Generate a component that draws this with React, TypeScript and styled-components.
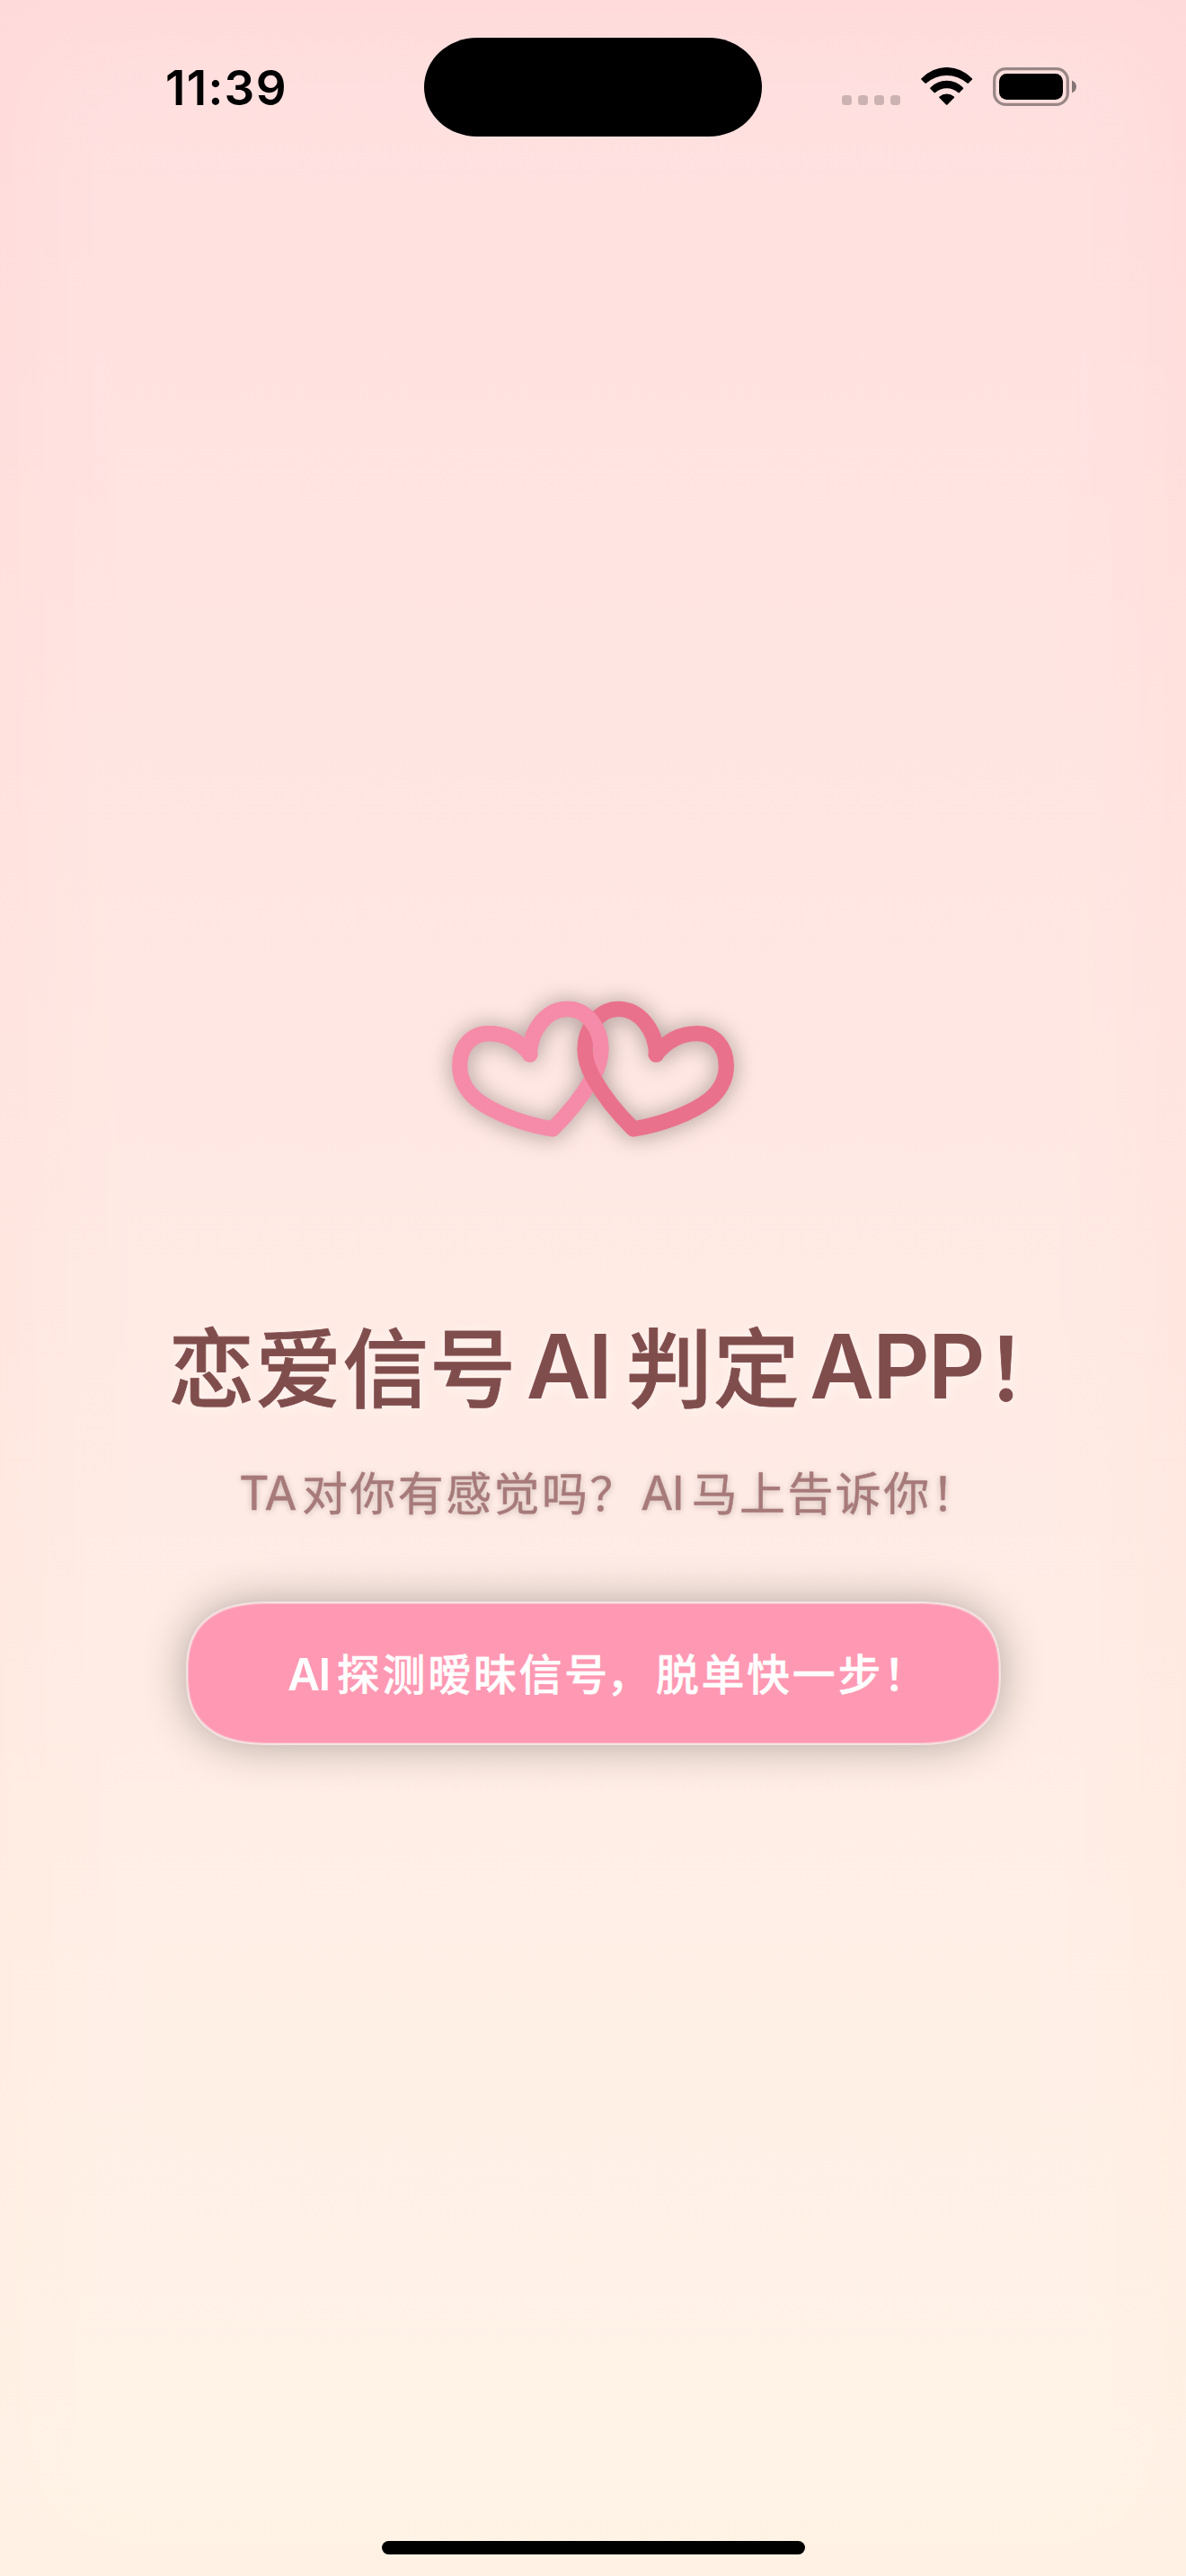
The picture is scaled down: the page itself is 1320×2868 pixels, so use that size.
import React from "react";
import styled, { createGlobalStyle } from "styled-components";

const GlobalStyle = createGlobalStyle`
  html, body { margin: 0; padding: 0; }
  *, *::before { box-sizing: border-box; }
`;

const latin = `Inter, "Liberation Sans", sans-serif`;
const chinese = `"Noto Sans CJK SC", "Noto Sans", sans-serif`;

const Screen = styled.div`
  position: relative;
  z-index: 0;
  display: flex;
  flex-direction: column;
  width: 1320px;
  height: 2868px;
  overflow: hidden;
  background: linear-gradient(180deg, #ffdada 0%, #fff2e4 100%);

  &::before {
    content: "";
    position: absolute;
    z-index: -1;
    inset: 40px;
    background: rgba(255, 255, 255, 0.16);
    filter: blur(60px);
  }
`;

const StatusBar = styled.header`
  display: grid;
  grid-template-columns: 1fr 376px 1fr;
  align-items: start;
  height: 194px;
  padding-top: 42px;
`;

const Clock = styled.time`
  padding-left: 184px;
  margin-top: 25px;
  font: 600 53px/62px ${latin};
  letter-spacing: 1.3px;
  color: #000;
`;

const Island = styled.div`
  height: 110px;
  border-radius: 59px / 55px;
  background: #000;
`;

const Indicators = styled.div`
  display: flex;
  justify-content: flex-end;
  align-items: flex-start;
  padding: 33px 122px 0 0;
`;

const SignalDots = styled.div`
  display: flex;
  gap: 7px;
  margin: 31px 23px 0 0;
`;

const Dot = styled.span`
  width: 11px;
  height: 11px;
  border-radius: 3.5px;
  background: rgba(0, 0, 0, 0.2);
`;

const WifiIcon = styled.svg`
  width: 58px;
  height: 42px;
  margin-right: 22px;
`;

const BatteryIcon = styled.svg`
  width: 93px;
  height: 43px;
`;

const Content = styled.main`
  flex: 1;
  display: flex;
  flex-direction: column;
  align-items: center;
  padding-top: 876px;
`;

const Hearts = styled.svg`
  width: 400px;
  height: 240px;
  overflow: visible;
  filter: drop-shadow(0 1px 12px rgba(0, 0, 0, 0.36));
`;

const Title = styled.h1`
  margin: 148px 0 0;
  font: 500 96px/120px ${chinese};
  letter-spacing: 1px;
  white-space: nowrap;
  color: #804d4d;
  -webkit-text-stroke: 0.8px #804d4d;
  text-shadow: 0 2px 16px rgba(255, 255, 255, 0.55);
`;

const Subtitle = styled.p`
  margin: 42px 0 0;
  font: 400 51px/80px ${chinese};
  letter-spacing: 2.4px;
  white-space: nowrap;
  color: #a77a7a;
  -webkit-text-stroke: 0.4px #a77a7a;
  text-shadow: 0 1px 7px rgba(0, 0, 0, 0.24);
`;

const Button = styled.button`
  display: flex;
  align-items: center;
  justify-content: center;
  width: 907px;
  height: 160px;
  margin: 83px 0 0;
  padding: 0 0 4px;
  border: 2px solid #f3e3e2;
  border-radius: 96px / 80px;
  corner-shape: superellipse(1.38);
  background: #ff99b3;
  box-shadow: inset 0 0 0 1px #ffb8c9, 0 1px 48px rgba(0, 0, 0, 0.31);
  font: 500 48px/76px ${chinese};
  letter-spacing: 2.7px;
  white-space: nowrap;
  color: #fff;
  -webkit-text-stroke: 0.4px #fff;
`;

const Label = styled.span`
  display: block;
`;

interface LatinProps {
  $size: number;
  $weight: number;
  $track: number;
  $before: number;
  $after: number;
  $lift: number;
  $stroke?: number;
}

const Latin = styled.span<LatinProps>`
  font: ${(p) => p.$weight} ${(p) => p.$size}px/1 ${latin};
  letter-spacing: ${(p) => p.$track}px;
  margin: 0 ${(p) => p.$after}px 0 ${(p) => p.$before}px;
  vertical-align: ${(p) => p.$lift}px;
  -webkit-text-stroke-width: ${(p) => p.$stroke ?? 0}px;
`;

const Mark = styled.span<{ $before?: number; $trim: number }>`
  margin: 0 ${(p) => -p.$trim}px 0 ${(p) => p.$before ?? 0}px;
`;

const HomeArea = styled.footer`
  display: flex;
  justify-content: center;
  padding-bottom: 24px;
`;

const HomeIndicator = styled.div`
  width: 471px;
  height: 15px;
  border-radius: 8px;
  background: #000;
`;

const heart =
  "M390 312C350 262 300 242 252 242C195 242 155 285 155 350C155 395 178 435 212 463C270 508 370 545 465 561C512 515 562 455 597 393C615 362 627 330 627 295C627 225 580 160 515 160C445 160 390 230 388 312Z";

function LinkedHearts() {
  return (
    <Hearts viewBox="0 0 1200 720" fill="none" strokeWidth={52} strokeLinejoin="round">
      <defs>
        <clipPath id="upper">
          <rect x="0" y="0" width="1200" height="295" />
        </clipPath>
      </defs>
      <path d={heart} stroke="#f58ba8" />
      <path d={heart} stroke="#ea718c" transform="translate(1200 0) scale(-1 1)" />
      <path d={heart} stroke="#f58ba8" clipPath="url(#upper)" />
    </Hearts>
  );
}

export default function App() {
  return (
    <>
      <GlobalStyle />
      <Screen>
        <StatusBar>
          <Clock>11:39</Clock>
          <Island />
          <Indicators>
            <SignalDots>
              {[0, 1, 2, 3].map((i) => (
                <Dot key={i} />
              ))}
            </SignalDots>
            <WifiIcon viewBox="0 0 58 42">
              <path d="M.6 12.2A38.4 38.4 0 0 1 56.8 12.2Q57.6 13 56.8 13.8L53 17.6Q52.2 18.4 51.4 17.6A34 34 0 0 0 6 17.6Q5.2 18.4 4.4 17.6L.6 13.8Q-.2 13 .6 12.2Z" />
              <path d="M10.5 22.4A25.5 25.5 0 0 1 46.9 22.4Q47.7 23.2 46.9 24L42.9 28Q42.1 28.8 41.3 28A19 19 0 0 0 16.1 28Q15.3 28.8 14.5 28L10.5 24Q9.7 23.2 10.5 22.4Z" />
              <path d="M20.6 32.5A12.5 12.5 0 0 1 36.8 32.5Q37.6 33.3 36.8 34.1L29.5 41.4Q28.7 42.2 27.9 41.4L20.6 34.1Q19.8 33.3 20.6 32.5Z" />
            </WifiIcon>
            <BatteryIcon viewBox="0 0 93 43">
              <rect x="1.7" y="1.7" width="81.6" height="39.6" rx="12.5" fill="none" stroke="#000" strokeOpacity=".4" strokeWidth="3.3" />
              <rect x="7" y="7" width="71" height="29" rx="8.5" />
              <path d="M88 14.5C91 15.7 93 18.3 93 21.5S91 27.3 88 28.5Z" fillOpacity=".48" />
            </BatteryIcon>
          </Indicators>
        </StatusBar>
        <Content>
          <LinkedHearts />
          <Title>
            恋爱信号
            <Latin $size={98.5} $weight={600} $track={-3} $before={10.5} $after={18} $lift={2}>AI</Latin>
            判定
            <Latin $size={98.5} $weight={600} $track={-1.8} $before={10.6} $after={1} $lift={2}>APP</Latin>
            <Mark $trim={60}>！</Mark>
          </Title>
          <Subtitle>
            <Latin $size={52} $weight={400} $track={-0.5} $before={0} $after={6} $lift={1} $stroke={0.4}>TA</Latin>
            对你有感觉吗？
            <Latin $size={52} $weight={400} $track={-1.5} $before={3.5} $after={9.5} $lift={1} $stroke={0.4}>AI</Latin>
            马上告诉你<Mark $trim={36}>！</Mark>
          </Subtitle>
          <Button>
            <Label>
              <Latin $size={49.5} $weight={600} $track={-1.5} $before={0} $after={8} $lift={0.5}>AI</Latin>
              探测暧昧信号<Mark $before={-4} $trim={-4}>，</Mark>脱单快一步<Mark $trim={34}>！</Mark>
            </Label>
          </Button>
        </Content>
        <HomeArea>
          <HomeIndicator />
        </HomeArea>
      </Screen>
    </>
  );
}
